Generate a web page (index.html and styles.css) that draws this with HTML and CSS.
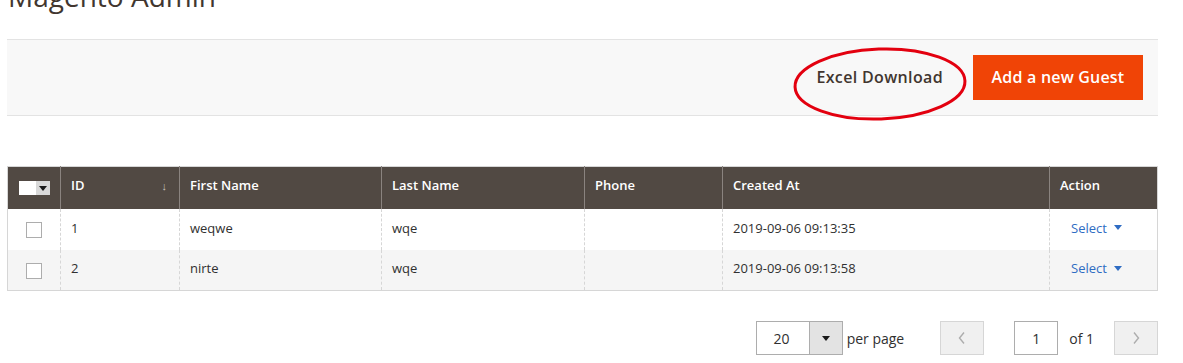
FILE: index.html
```html
<!DOCTYPE html>
<html>
<head>
<meta charset="utf-8">
<link rel="stylesheet" href="styles.css">
</head>
<body>
<div class="page">
  <header class="page-header">
    <h1 class="page-title">Magento Admin</h1>
  </header>

  <div class="page-actions">
    <button class="btn-secondary">Excel Download</button>
    <button class="btn-primary">Add a new Guest</button>
    <svg class="annotation" width="190" height="84" viewBox="0 0 190 84">
      <ellipse cx="95" cy="41" rx="85" ry="35" fill="none" stroke="#e3000f" stroke-width="3" transform="rotate(-2 95 41)"/>
    </svg>
  </div>

  <table class="grid">
    <colgroup>
      <col class="c-check"><col class="c-id"><col class="c-first"><col class="c-last"><col class="c-phone"><col class="c-created"><col class="c-action">
    </colgroup>
    <thead>
      <tr>
        <th class="th-check"><span class="mass"><span class="mass-box"></span><span class="mass-toggle"><span class="tri-dark"></span></span></span></th>
        <th><span class="th-inner">ID<span class="sort">↓</span></span></th>
        <th>First Name</th>
        <th>Last Name</th>
        <th>Phone</th>
        <th>Created At</th>
        <th>Action</th>
      </tr>
    </thead>
    <tbody>
      <tr>
        <td class="td-check"><span class="cb"></span></td>
        <td>1</td>
        <td>weqwe</td>
        <td>wqe</td>
        <td></td>
        <td>2019-09-06 09:13:35</td>
        <td class="td-action"><a class="select">Select<span class="tri-blue"></span></a></td>
      </tr>
      <tr class="alt">
        <td class="td-check"><span class="cb"></span></td>
        <td>2</td>
        <td>nirte</td>
        <td>wqe</td>
        <td></td>
        <td>2019-09-06 09:13:58</td>
        <td class="td-action"><a class="select">Select<span class="tri-blue"></span></a></td>
      </tr>
    </tbody>
  </table>

  <div class="pager">
    <div class="limiter">
      <span class="limiter-value">20</span>
      <span class="limiter-toggle"><span class="tri-dark"></span></span>
    </div>
    <span class="per-page">per page</span>
    <button class="nav-btn prev"><svg width="10" height="14" viewBox="0 0 10 14"><path d="M7 1.5 L2.5 7 L7 12.5" fill="none" stroke="#adadad" stroke-width="1.4"/></svg></button>
    <span class="page-input">1</span>
    <span class="of">of 1</span>
    <button class="nav-btn next"><svg width="10" height="14" viewBox="0 0 10 14"><path d="M3 1.5 L7.5 7 L3 12.5" fill="none" stroke="#adadad" stroke-width="1.4"/></svg></button>
  </div>
</div>
</body>
</html>
```

FILE: styles.css
```css
* { box-sizing: border-box; }
html, body { margin: 0; padding: 0; background: #fff; }
body {
  font-family: "Open Sans", "Liberation Sans", sans-serif;
  color: #303030;
  font-size: 13px;
  overflow: hidden;
}
.page {
  width: 1151px;
  margin-left: 7px;
}
.page-header {
  height: 39px;
  position: relative;
  overflow: hidden;
}
.page-title {
  margin: -23px 0 0 1px;
  font-size: 28px;
  font-weight: 400;
  line-height: 38px;
  color: #41362f;
  letter-spacing: 0;
}
.page-actions {
  position: relative;
  display: flex;
  justify-content: flex-end;
  align-items: center;
  height: 77px;
  padding: 0 15px;
  background: #f8f8f8;
  border-top: 1px solid #e3e3e3;
  border-bottom: 1px solid #e3e3e3;
}
.btn-secondary {
  font-family: inherit;
  font-size: 16px;
  font-weight: 600;
  color: #41362f;
  background: transparent;
  border: 0;
  padding: 0 15px 2px;
  height: 45px;
  margin-right: 15px;
  letter-spacing: 0.35px;
}
.btn-primary {
  font-family: inherit;
  font-size: 16px;
  font-weight: 600;
  color: #fff;
  background: #f04406;
  border: 0;
  height: 45px;
  width: 170px;
  padding: 0 0 2px;
  letter-spacing: 0.2px;
}
.annotation {
  position: absolute;
  left: 778px;
  top: 3px;
}
.grid {
  margin-top: 50px;
  width: 1151px;
  border-collapse: collapse;
  table-layout: fixed;
  border: 1px solid #d6d6d6;
}
.c-check { width: 53px; }
.c-id { width: 119px; }
.c-first { width: 202px; }
.c-last { width: 203px; }
.c-phone { width: 138px; }
.c-created { width: 327px; }
.c-action { width: 108px; }
.grid th {
  background: #514943;
  color: #fff;
  font-weight: 600;
  text-align: left;
  height: 42px;
  padding: 0 10px 5px;
  border-left: 1px solid #8a837f;
  font-size: 13px;
}
.grid th:first-child { border-left: 0; }
.th-inner { display: flex; justify-content: space-between; align-items: center; }
.sort { font-weight: 400; color: #c9c3bf; font-size: 11px; margin-right: 2px; }
.th-check { padding: 0 0 2px !important; text-align: center !important; }
.mass {
  display: inline-flex;
  vertical-align: middle;
  height: 14px;
  margin-left: 1px;
}
.mass-box { width: 17px; height: 14px; background: #fff; }
.mass-toggle {
  width: 14px; height: 14px; background: #d9d9d9;
  display: flex; align-items: center; justify-content: center;
}
.tri-dark {
  display: inline-block;
  width: 0; height: 0;
  border-left: 4px solid transparent;
  border-right: 4px solid transparent;
  border-top: 5px solid #1a1a1a;
}
.grid td {
  height: 41px;
  padding: 0 10px 3px;
  border-left: 1px dashed #d6d6d6;
  color: #303030;
}
.grid td:first-child { border-left: 0; }
.grid tr.alt td { background: #f5f5f5; }
.td-check { text-align: center; padding: 0 !important; }
.cb {
  display: inline-block;
  width: 16px; height: 16px;
  border: 1px solid #adadad;
  background: #fff;
  vertical-align: middle;
  margin-left: -1px;
}
.td-action { padding-left: 21px !important; }
.select { color: #2e6cc3; text-decoration: none; display: inline-flex; align-items: center; }
.tri-blue {
  display: inline-block;
  width: 0; height: 0;
  margin-left: 7px;
  border-left: 4px solid transparent;
  border-right: 4px solid transparent;
  border-top: 5px solid #2e6cc3;
}
.pager {
  margin-top: 30px;
  display: flex;
  align-items: center;
  justify-content: flex-end;
  height: 34px;
}
.limiter {
  display: flex;
  width: 87px;
  height: 34px;
  border: 1px solid #adadad;
}
.limiter-value {
  flex: 1;
  display: flex; align-items: center; justify-content: center;
  font-size: 14px; color: #303030;
  padding-right: 2px;
}
.limiter-toggle {
  width: 33px;
  background: #e3e3e3;
  border-left: 1px solid #adadad;
  display: flex; align-items: center; justify-content: center;
}
.per-page {
  font-size: 14px;
  color: #303030;
  margin-left: 4px;
  margin-right: 36px;
}
.nav-btn {
  width: 44px; height: 34px;
  background: #f0f0f0;
  border: 1px solid #d6d6d6;
  padding: 0;
  display: flex; align-items: center; justify-content: center;
}
.page-input {
  margin-left: 30px;
  width: 44px; height: 34px;
  border: 1px solid #adadad;
  display: flex; align-items: center; justify-content: center;
  font-size: 14px;
}
.of {
  font-size: 14px;
  margin-left: 11px;
  margin-right: 20px;
}
```
